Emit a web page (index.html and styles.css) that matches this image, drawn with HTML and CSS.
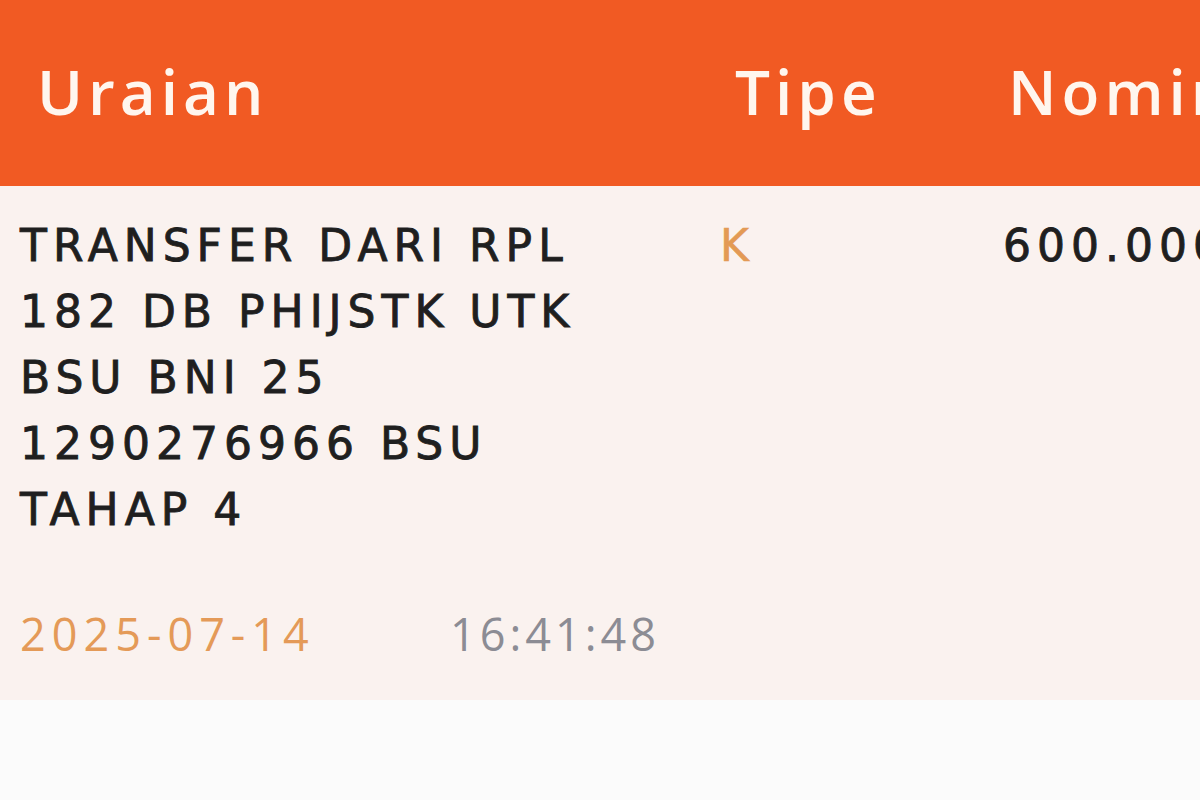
FILE: index.html
```html
<!DOCTYPE html>
<html lang="id">
<head>
<meta charset="utf-8">
<title>Mutasi</title>
<link rel="stylesheet" href="styles.css">
</head>
<body>
<div class="table">
  <div class="thead">
    <div class="th th-desc">Uraian</div>
    <div class="th th-type">Tipe</div>
    <div class="th th-amount">Nominal</div>
  </div>
  <div class="row">
    <div class="cell cell-desc">
      <div class="desc">TRANSFER DARI RPL<br>182 DB PHIJSTK UTK<br>BSU BNI 25<br>1290276966 BSU<br>TAHAP 4</div>
      <div class="stamp">
        <span class="date">2025-07-14</span>
        <span class="time">16:41:48</span>
      </div>
    </div>
    <div class="cell cell-type">K</div>
    <div class="cell cell-amount">600.000</div>
  </div>
</div>
</body>
</html>
```
FILE: styles.css
```css
html, body {
  margin: 0;
  padding: 0;
}
body {
  width: 1200px;
  height: 800px;
  overflow: hidden;
  background: #fbfbfb;
  font-family: "DejaVu Sans", sans-serif;
}
.table {
  width: 1200px;
}
.thead {
  height: 186px;
  background: #f15a23;
  display: grid;
  grid-template-columns: 720px 283px 1fr;
  align-items: center;
  white-space: nowrap;
  overflow: hidden;
}
.th {
  font-family: "Open Sans", sans-serif;
  font-weight: 600;
  font-size: 62px;
  letter-spacing: 5px;
  color: #fff6ee;
  padding-bottom: 4px;
}
.th-desc { padding-left: 37px; }
.th-type { padding-left: 15px; }
.th-amount { padding-left: 5px; }
.row {
  height: 514px;
  background: #faf2ef;
  display: grid;
  grid-template-columns: 720px 283px 1fr;
  white-space: nowrap;
  overflow: hidden;
}
.cell {
  padding-top: 27px;
}
.cell-desc {
  padding-left: 20px;
}
.desc {
  font-size: 44px;
  line-height: 66px;
  letter-spacing: 6px;
  color: #1f1f1f;
  -webkit-text-stroke: 0.9px #1f1f1f;
}
.stamp {
  margin-top: 58px;
  display: flex;
  font-family: "Open Sans", sans-serif;
  font-weight: 500;
  font-size: 45px;
  line-height: 66px;
}
.date {
  color: #e49a58;
  width: 430px;
  letter-spacing: 6px;
}
.time {
  color: #8c8c94;
  letter-spacing: 4px;
}
.cell-type {
  font-size: 44px;
  line-height: 66px;
  color: #e39a55;
  -webkit-text-stroke: 0.6px #e39a55;
}
.cell-amount {
  font-size: 44px;
  line-height: 66px;
  letter-spacing: 6px;
  color: #1f1f1f;
  -webkit-text-stroke: 0.9px #1f1f1f;
}
```
